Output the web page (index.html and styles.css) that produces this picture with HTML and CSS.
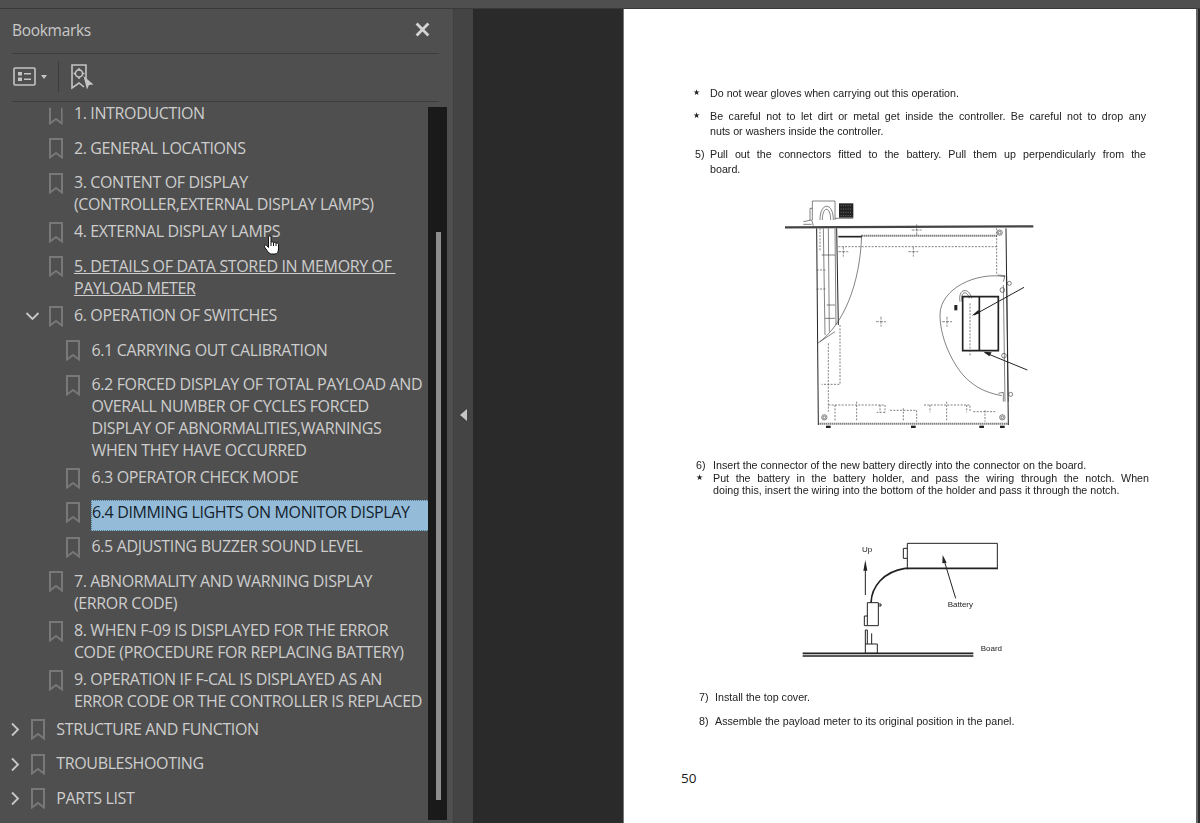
FILE: index.html
```html
<!DOCTYPE html>
<html lang="en">
<head>
<meta charset="utf-8">
<title>Bookmarks</title>
<link rel="stylesheet" href="styles.css">
</head>
<body>
<svg class="defs" width="0" height="0" aria-hidden="true">
  <symbol id="bm" viewBox="0 0 14 21"><path d="M1 1H13V19.5L7 15L1 19.5Z"/></symbol>
  <symbol id="cr" viewBox="0 0 10 15"><path d="M2 1.5L8 7.5L2 13.5"/></symbol>
  <symbol id="cd" viewBox="0 0 15 10"><path d="M1.5 2L7.5 8L13.5 2"/></symbol>
</svg>
<div class="topbar"></div>
<div class="main">
  <aside class="panel">
    <header class="panel-head">
      <span class="panel-title">Bookmarks</span>
      <svg class="close" viewBox="0 0 14 14"><path d="M1.5 1.5L12.5 12.5M12.5 1.5L1.5 12.5"/></svg>
    </header>
    <div class="toolbar">
      <svg class="tool-list" viewBox="0 0 23 19"><rect x="1" y="1" width="21" height="17" rx="1"/><rect class="solid" x="5" y="5" width="4" height="3.5"/><rect class="solid" x="5" y="10.5" width="4" height="3.5"/><path d="M11 6.7H18M11 12.2H18"/></svg>
      <span class="caret"></span>
      <span class="tool-sep"></span>
      <svg class="tool-find" viewBox="0 0 23 26"><path d="M15 17V1H1V24L8 19L13 23"/><circle cx="8" cy="9.500" r="3.600"/><path d="M8 4V5.500M8 13.500V15M2.500 9.500H4M12 9.500H13.500"/><path class="solid" d="M12.500 12L22.500 20.500L18 21L16 25.500Z"/></svg>
    </div>
    <div class="tree-wrap">
      <ul class="tree">
        <li class="row lvl1"><span class="twist"></span><svg class="bm bm-cut"><use href="#bm"/></svg><span class="label">1. INTRODUCTION</span></li>
        <li class="row lvl1"><span class="twist"></span><svg class="bm"><use href="#bm"/></svg><span class="label">2. GENERAL LOCATIONS</span></li>
        <li class="row lvl1"><span class="twist"></span><svg class="bm"><use href="#bm"/></svg><span class="label">3. CONTENT OF DISPLAY<br>(CONTROLLER,EXTERNAL DISPLAY LAMPS)</span></li>
        <li class="row lvl1"><span class="twist"></span><svg class="bm"><use href="#bm"/></svg><span class="label">4. EXTERNAL DISPLAY LAMPS</span></li>
        <li class="row lvl1"><span class="twist"></span><svg class="bm"><use href="#bm"/></svg><span class="label hover">5. DETAILS OF DATA STORED IN MEMORY OF&nbsp;<br>PAYLOAD METER</span></li>
        <li class="row lvl1"><span class="twist"><svg class="chev-down"><use href="#cd"/></svg></span><svg class="bm"><use href="#bm"/></svg><span class="label">6. OPERATION OF SWITCHES</span></li>
        <li class="row lvl2"><span class="twist"></span><svg class="bm"><use href="#bm"/></svg><span class="label">6.1 CARRYING OUT CALIBRATION</span></li>
        <li class="row lvl2"><span class="twist"></span><svg class="bm"><use href="#bm"/></svg><span class="label">6.2 FORCED DISPLAY OF TOTAL PAYLOAD AND<br>OVERALL NUMBER OF CYCLES FORCED<br>DISPLAY OF ABNORMALITIES,WARNINGS<br>WHEN THEY HAVE OCCURRED</span></li>
        <li class="row lvl2"><span class="twist"></span><svg class="bm"><use href="#bm"/></svg><span class="label">6.3 OPERATOR CHECK MODE</span></li>
        <li class="row lvl2"><span class="twist"></span><svg class="bm"><use href="#bm"/></svg><span class="label selected">6.4 DIMMING LIGHTS ON MONITOR DISPLAY</span></li>
        <li class="row lvl2"><span class="twist"></span><svg class="bm"><use href="#bm"/></svg><span class="label">6.5 ADJUSTING BUZZER SOUND LEVEL</span></li>
        <li class="row lvl1"><span class="twist"></span><svg class="bm"><use href="#bm"/></svg><span class="label">7. ABNORMALITY AND WARNING DISPLAY<br>(ERROR CODE)</span></li>
        <li class="row lvl1"><span class="twist"></span><svg class="bm"><use href="#bm"/></svg><span class="label">8. WHEN F-09 IS DISPLAYED FOR THE ERROR<br>CODE (PROCEDURE FOR REPLACING BATTERY)</span></li>
        <li class="row lvl1"><span class="twist"></span><svg class="bm"><use href="#bm"/></svg><span class="label">9. OPERATION IF F-CAL IS DISPLAYED AS AN<br>ERROR CODE OR THE CONTROLLER IS REPLACED</span></li>
        <li class="row lvl0"><span class="twist"><svg class="chev-right"><use href="#cr"/></svg></span><svg class="bm"><use href="#bm"/></svg><span class="label">STRUCTURE AND FUNCTION</span></li>
        <li class="row lvl0"><span class="twist"><svg class="chev-right"><use href="#cr"/></svg></span><svg class="bm"><use href="#bm"/></svg><span class="label">TROUBLESHOOTING</span></li>
        <li class="row lvl0"><span class="twist"><svg class="chev-right"><use href="#cr"/></svg></span><svg class="bm"><use href="#bm"/></svg><span class="label">PARTS LIST</span></li>
      </ul>
      <div class="scrollbar"><div class="thumb"></div></div>
    </div>
  </aside>
  <div class="gutter"><span class="collapse"></span></div>
  <div class="viewer">
    <article class="page">
      <div class="item"><span class="mark star">★</span><p>Do not wear gloves when carrying out this operation.</p></div>
      <div class="item gap-8"><span class="mark star">★</span><p><span class="just">Be careful not to let dirt or metal get inside the controller. Be careful not to drop any</span>nuts or washers inside the controller.</p></div>
      <div class="item gap-9"><span class="mark num">5)</span><p><span class="just">Pull out the connectors fitted to the battery. Pull them up perpendicularly from the</span>board.</p></div>
      <svg class="fig fig-one" viewBox="0 0 810 750">
        <g class="ink thin">
          <path d="M127 105V48H195V105M120 105V70H127M150 105C150 50 190 50 190 105M157 105C157 62 182 62 182 105"/>
          <path d="M100 118H125M195 100H250M100 110L125 105L130 122"/>
          <path d="M160 130L165 450M175 130L178 440M195 130L198 420M155 210H195M170 360H195M165 400H195"/>
          <path d="M275 150C270 300 220 420 143 475M150 470L195 440"/>
          <path d="M705 275C620 260 510 310 510 390C510 470 560 560 600 590C630 615 660 625 695 632"/>
          <path d="M570 350C563 310 597 305 605 340M576 350C570 318 592 315 598 340M683 270L705 272L700 290"/>
          <path d="M710 272L715 650M700 300L705 650M685 625L700 622L700 650"/>
          <circle cx="689" cy="143" r="8"/><circle cx="689" cy="143" r="4"/><circle cx="697" cy="315" r="7"/><circle cx="718" cy="295" r="6"/><circle cx="702" cy="512" r="7"/><circle cx="722" cy="628" r="6"/><circle cx="163" cy="697" r="8"/><circle cx="163" cy="697" r="4"/><circle cx="697" cy="697" r="8"/><circle cx="697" cy="697" r="4"/>
        </g>
        <g class="ink">
          <path class="plate" d="M45 127L790 124"/>
          <path d="M140 130L145 720M708 130L715 720M200 130L205 420"/>
          <path class="heavy" d="M205 155H275"/>
          <path class="heavy" d="M578 335H628V497H578ZM628 335H685V497H628"/>
          <path d="M762 307L612 390M772 555L645 503"/>
          <path class="solid" d="M605 392L625 375L630 385ZM640 500L665 502L658 514Z"/>
          <rect class="solid" x="207" y="55" width="43" height="43"/>
          <path class="speck" d="M212 62H246M212 72H246M212 82H246M212 92H246"/>
          <rect class="solid" x="553" y="360" width="9" height="16"/>
          <rect class="solid" x="168" y="722" width="14" height="7"/><rect class="solid" x="423" y="722" width="14" height="7"/><rect class="solid" x="628" y="722" width="14" height="7"/><rect class="solid" x="690" y="722" width="14" height="7"/>
        </g>
        <g class="ink dash">
          <path class="dense" d="M275 152H680M145 716H715"/>
          <path d="M205 185H680M680 130V270M210 420V598H155M175 475V680"/>
          <path d="M175 660H345V682M360 676H440V710M462 660H600V682M610 680H680M195 660V710M260 650V710M330 660V682M345 682H320M400 670V710M480 660V682M530 650V710M590 660V682M645 676V710"/>
          <path d="M600 355V515M140 255H170M140 312H170M150 130V200"/>
        </g>
        <g class="ink thin">
          <path class="cross" d="M205 200H235M220 185V215M415 200H445M430 185V215M318 410H348M333 395V425M516 410H546M531 395V425M425 135H455M440 118V150"/>
        </g>
      </svg>
      <div class="block gap-24">
        <div class="line"><span class="mark num">6)</span><p>Insert the connector of the new battery directly into the connector on the board.</p></div>
        <div class="line"><span class="mark star">★</span><p><span class="just">Put the battery in the battery holder, and pass the wiring through the notch. When</span>doing this, insert the wiring into the bottom of the holder and pass it through the notch.</p></div>
      </div>
      <svg class="fig fig-two" viewBox="0 0 690 420">
        <g class="ink">
          <path d="M352 118V40H622V118"/>
          <path class="heavy" d="M345 115H622"/>
          <path d="M352 55H340V85H352"/>
          <path d="M497 205L462 90"/>
          <path class="solid" d="M458 75L470 98L457 100Z"/>
          <path d="M226 195V110"/>
          <path class="solid" d="M226 90L232 122H220Z"/>
          <path class="heavy" d="M243 218C245 170 280 125 345 115"/>
          <path d="M232 218H265V287H232ZM232 258H223V287H232M265 222H273V228H265"/>
          <path d="M226 342V300H232V342M245 342V310M226 342H262V370H226Z"/>
          <path class="heavy" d="M38 370H550M38 378H550"/>
        </g>
        <text class="fig-label" x="216" y="66">Up</text>
        <text class="fig-label" x="473" y="231">Battery</text>
        <text class="fig-label" x="572" y="364">Board</text>
      </svg>
      <div class="item gap-20 narrow"><span class="mark">7)</span><p>Install the top cover.</p></div>
      <div class="item gap-9 narrow"><span class="mark">8)</span><p>Assemble the payload meter to its original position in the panel.</p></div>
      <div class="page-no">50</div>
    </article>
  </div>
</div>
<svg class="hand" viewBox="0 0 18 20"><path d="M5.500 2C5.500 .5 8 .5 8 2V7.500C8 6.500 10.500 6.500 10.500 8C10.500 7 13 7 13 8.500C13 7.500 15.500 7.800 15.500 9.500V14C15.500 17 14 19 12 19H8.500C6.500 19 5.500 17.500 4 15.500L1.500 12C.5 10.500 2.500 9.500 3.500 10.500L5.500 12.500Z"/><path d="M8 7.500V11M10.500 8V11M13 8.500V11"/></svg>
</body>
</html>
```
FILE: styles.css
```css
* { box-sizing: border-box; }
html, body { margin: 0; padding: 0; height: 100%; }
body {
  display: flex;
  flex-direction: column;
  height: 823px;
  overflow: hidden;
  background: #2a2a2a;
  font-family: "Open Sans", "Noto Sans", sans-serif;
}
.defs { position: absolute; }
.topbar { flex: 0 0 9px; background: #4f4f4f; border-bottom: 1px solid #3a3a3a; }
.main { flex: 1; display: flex; min-height: 0; }

/* side panel */
.panel { flex: 0 0 453px; display: flex; flex-direction: column; background: #4f4f4f; color: #cfcfcf; }
.panel-head {
  flex: 0 0 45px;
  margin: 0 14px 0 12px;
  padding-right: 9px;
  display: flex;
  align-items: center;
  justify-content: space-between;
  border-bottom: 1px solid #3d3d3d;
}
.panel-title { font-size: 15.5px; color: #c9c9c9; letter-spacing: -.3px; margin-top: -2px; }
.close { width: 15px; height: 15px; margin-top: -3px; fill: none; stroke: #d4d4d4; stroke-width: 2.6; }
.toolbar {
  flex: 0 0 48px;
  margin: 0 14px 0 12px;
  padding: 0 0 2px 1px;
  display: flex;
  align-items: center;
  border-bottom: 1px solid #3d3d3d;
}
.tool-list { width: 23px; height: 19px; fill: none; stroke: #c4c4c4; stroke-width: 1.600; }
.tool-list .solid, .tool-find .solid { fill: #c4c4c4; stroke: none; }
.caret { width: 0; height: 0; margin-left: 5px; border: 3.500px solid transparent; border-top: 4px solid #c4c4c4; border-bottom: 0; }
.tool-sep { width: 1px; height: 31px; margin: 0 12px 0 11px; background: #3c3c3c; }
.tool-find { width: 23px; height: 26px; fill: none; stroke: #c4c4c4; stroke-width: 1.600; }

.tree-wrap { flex: 1; display: flex; margin-top: 5px; min-height: 0; }
.tree { flex: 0 0 428px; list-style: none; margin: -4.700px 0 0; padding: 0; }
.row { display: flex; align-items: flex-start; min-height: 34.4px; }
.lvl0 { padding-left: 6px; }
.lvl1 { padding-left: 23.600px; }
.lvl2 { padding-left: 41.200px; }
.twist { flex: 0 0 25px; height: 22px; display: flex; }
.bm { flex: 0 0 14px; width: 14px; height: 21px; margin-top: 1.500px; fill: none; stroke: #787878; stroke-width: 2; }
.bm-cut { clip-path: inset(4px 0 0 0); }
.label {
  flex: 1;
  margin-left: 10.300px;
  padding: 0 0 5.400px 1px;
  font-size: 16px;
  line-height: 22px;
  letter-spacing: -.36px;
  color: #cdcdcd;
  white-space: nowrap;
}
.hover { text-decoration: underline; }
.selected {
  margin: -.600px 0 -2.600px 10.800px;
  padding: 0 0 7px;
  border: 1px dotted #4d7690;
  border-width: 1px 0 1px 1px;
  background: #94bcd9;
  color: #14222c;
}
.chev-right { width: 10px; height: 15px; margin: 4.500px 0 0 4px; fill: none; stroke: #c9c9c9; stroke-width: 1.800; }
.chev-down { width: 15px; height: 10px; margin: 7px 0 0 1.500px; fill: none; stroke: #c9c9c9; stroke-width: 1.800; }
.scrollbar { flex: 0 0 19px; background: #1a1a1a; margin-bottom: 3px; padding: 125px 0 0 8px; }
.thumb { width: 5px; height: 568px; background: #8e8e8e; }

/* splitter */
.gutter {
  flex: 0 0 20px;
  display: flex;
  align-items: center;
  justify-content: center;
  background: #444;
  border-left: 1px solid #3f3f3f;
}
.collapse { width: 0; height: 0; border: 6.500px solid transparent; border-right: 7px solid #c6c6c6; border-left: 0; margin-right: 1px; margin-bottom: 2px; }

/* document */
.viewer { flex: 1; padding-left: 150px; padding-right: 2px; display: flex; min-width: 0; }
.page {
  flex: 1;
  background: #fff;
  border-left: 1px solid #777;
  border-right: 2px solid #666;
  padding-top: 77px;
  color: #222;
  font-family: "Liberation Sans", Arial, sans-serif;
  font-size: 10.700px;
  line-height: 14.500px;
  overflow: hidden;
}
.item { display: flex; margin-left: 69px; width: 453px; }
.page p { margin: 0; flex: 1; filter: blur(.35px); }
.mark { flex: 0 0 17px; filter: blur(.35px); }
.num { padding-left: 2px; }
.star { font-family: "DejaVu Sans", sans-serif; font-size: 8px; }
.just { display: block; text-align: justify; text-align-last: justify; }
.gap-8 { margin-top: 8.500px; }
.gap-9 { margin-top: 9px; }
.gap-20 { margin-top: 20px; }
.gap-24 { margin-top: 24px; }
.block { line-height: 12.700px; width: 453px; margin-left: 72px; }
.block .num { padding-left: 0; }
.line { display: flex; }
.narrow { margin-left: 75px; }
.narrow .mark { flex-basis: 16px; }
.fig { display: block; filter: blur(.5px); }
.fig-one { width: 270px; height: 250px; margin: 9px 0 0 146px; }
.fig-two { width: 230px; height: 140px; margin: 33px 0 0 166px; }
.ink { fill: none; stroke: #222; stroke-width: 3; }
.ink .solid { fill: #222; stroke: none; }
.ink .heavy { stroke-width: 5; }
.ink .plate { stroke: #444; stroke-width: 7; }
.ink .speck { stroke: #999; stroke-width: 2; stroke-dasharray: 3 4; }
.thin { stroke: #444; stroke-width: 2; }
.ink .cross { stroke: #555; stroke-dasharray: 9 3; }
.dash { stroke: #444; stroke-width: 2; stroke-dasharray: 6 4; }
.dash .dense { stroke-width: 6; stroke-dasharray: 3 3; }
.fig-label { font-family: "Liberation Sans", Arial, sans-serif; font-size: 24px; fill: #222; stroke: none; }
.page-no { margin: 41px 0 0 57px; font-family: "Open Sans", sans-serif; font-size: 13.500px; line-height: 18px; color: #1a1a1a; }

/* pointer over the list */
.hand {
  position: absolute;
  left: 263px;
  top: 235px;
  width: 18px;
  height: 20px;
  fill: #fff;
  stroke: #111;
  stroke-width: 1;
}
```
